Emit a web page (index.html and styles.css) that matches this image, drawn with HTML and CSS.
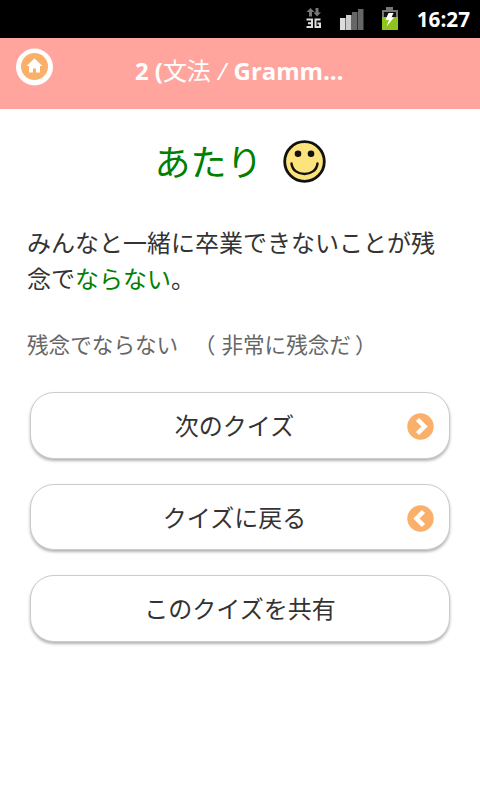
FILE: index.html
```
<!DOCTYPE html>
<html lang="ja">
<head>
  <meta charset="UTF-8" />
  <meta name="viewport" content="width=device-width, initial-scale=1.0"/>
  <title>2 (文法 / Grammar)</title>
  <link rel="stylesheet" href="styles.css">
</head>
<body>
  <div class="statusbar">
    <svg class="network" width="16" height="22" viewBox="0 0 16 22">
      <path fill="#777" d="M4.500 0l4 4H6v4.500H3V4H.5zM11 8.500L7.500 4.500H9.500V0h3v4.500H15z"/>
      <path fill="none" stroke="#ddd" stroke-width="2" d="M.5 11.500H6V19H.5M2 15.200H6M14.500 11.500H9.500V19h4.500v-3.500h-2.500"/>
    </svg>
    <svg class="signal" width="24" height="22" viewBox="0 0 24 22">
      <path fill="#ddd" d="M0 10h5.500v12H0z"/>
      <path fill="#ccc" d="M6 7h5.500v15H6z"/>
      <path fill="#666" d="M12 4h5.500v18H12zM18 1h5.500v21H18z"/>
    </svg>
    <svg class="battery" width="18" height="24" viewBox="0 0 18 24">
      <path fill="#777" d="M5 0h7v3h5v8H1V3h4z"/>
      <path fill="#111" d="M3 5h12v5H3z"/>
      <path fill="#8fc31f" d="M1 10h16v13H1z"/>
      <path fill="#fff" d="M7.500 6h5l-2 4.500H13L5.500 19.500 8 13H4.500z"/>
    </svg>
    <span class="clock">16:27</span>
  </div>

  <div class="header">
    <a class="home" href="#">
      <svg width="38" height="38" viewBox="0 0 38 38">
        <circle cx="19.500" cy="19" r="18.500" fill="#fff"/>
        <circle cx="19.500" cy="18.500" r="13.500" fill="#faaf6b"/>
        <path fill="#fff" d="M19.500 10.500l8 7.500H25v6.500h-4v-4h-3v4h-4V18h-2.500z"/>
      </svg>
    </a>
    <h1>2 (<span>文法</span> <i>/</i> Gramm…</h1>
  </div>

  <div class="content">
    <div class="result">
      <span>あたり</span>
      <svg width="43" height="43" viewBox="0 0 43 43">
        <circle cx="21.500" cy="21.500" r="19.800" fill="#fde37c" stroke="#111" stroke-width="2.800"/>
        <circle cx="15" cy="13.700" r="3.300" fill="#111"/>
        <circle cx="28" cy="13.700" r="3.300" fill="#111"/>
        <path fill="none" stroke="#111" stroke-width="2.400" stroke-linecap="round" d="M8.500 23.500C10 37.500 33 37.500 34.500 23.500"/>
      </svg>
    </div>
    <p class="sentence">みんなと一緒に卒業できないことが残念で<span class="answer">ならない</span>。</p>
    <p class="note">残念でならない　<span class="open">（</span>非常に残念だ<span class="close">）</span></p>

    <div class="buttons">
      <button>次のクイズ
        <svg class="arrow" width="27" height="27" viewBox="0 0 27 27">
          <circle cx="13.500" cy="13.500" r="13.200" fill="#faaf6b"/>
          <path fill="none" stroke="#fff" stroke-width="4.500" d="M10.500 6.500l7 7-7 7"/>
        </svg>
      </button>
      <button>クイズに戻る
        <svg class="arrow" width="27" height="27" viewBox="0 0 27 27">
          <circle cx="13.500" cy="13.500" r="13.200" fill="#faaf6b"/>
          <path fill="none" stroke="#fff" stroke-width="4.500" d="M16.500 6.500l-7 7 7 7"/>
        </svg>
      </button>
      <button>このクイズを共有</button>
    </div>
  </div>
</body>
</html>
```

FILE: styles.css
```
body {
  margin: 0;
  min-height: 100vh;
  background-color: #fff;
  color: #333;
  font-family: "Noto Sans CJK JP", sans-serif;
  text-spacing-trim: space-all;
}

.statusbar {
  display: flex;
  justify-content: flex-end;
  align-items: center;
  height: 38px;
  box-sizing: border-box;
  padding-right: 10px;
  background-color: #000;
  color: #fff;
}

.network {
  margin-right: 18px;
}

.signal {
  margin-right: 17px;
}

.battery {
  margin-right: 18px;
}

.clock {
  font: bold 20.7px "Open Sans", sans-serif;
}

.header {
  display: grid;
  grid-template-columns: 120px 1fr 120px;
  height: 71px;
  background-color: #ffa59e;
}

.home {
  height: 38px;
  margin: 10px 0 0 15px;
}

.header h1 {
  margin: 0;
  padding-left: 15px;
  color: #fff;
  font: bold 23.9px/65px "Open Sans", "Noto Sans CJK JP", sans-serif;
  white-space: nowrap;
}

.header h1 span,
.header h1 i {
  font-weight: normal;
}

.header h1 i {
  margin: 0 1px;
}

.content {
  padding: 0 27px;
}

.result {
  display: flex;
  justify-content: center;
  align-items: center;
  gap: 20px;
  height: 104px;
  color: #008000;
  font-size: 36px;
}

.result span {
  padding-bottom: 2px;
  line-height: 50px;
}

.sentence {
  margin: 11px 0 0;
  font-size: 24px;
  line-height: 36px;
}

.answer {
  color: #008000;
}

.note {
  margin: 32px 0 0;
  color: #666;
  font-size: 21.6px;
  line-height: 32px;
}

/* keep the full-width brackets in the middle of their cell */
.open {
  margin: 0 6px 0 -6px;
}

.close {
  margin-left: 4px;
}

.buttons {
  display: flex;
  flex-direction: column;
  gap: 25px;
  margin: 32px 3px 0;
  padding-bottom: 20px;
}

button {
  position: relative;
  height: 66.5px;
  padding: 0 11px 1px 0;
  border: 1px solid #ccc;
  border-radius: 24px;
  background-color: #fff;
  box-shadow: 0 2px 3px rgba(0, 0, 0, 0.3);
  color: #333;
  font-family: inherit;
  font-size: 24px;
}

button:last-child {
  padding-right: 0;
}

.arrow {
  position: absolute;
  right: 15px;
  top: 20px;
}
```
